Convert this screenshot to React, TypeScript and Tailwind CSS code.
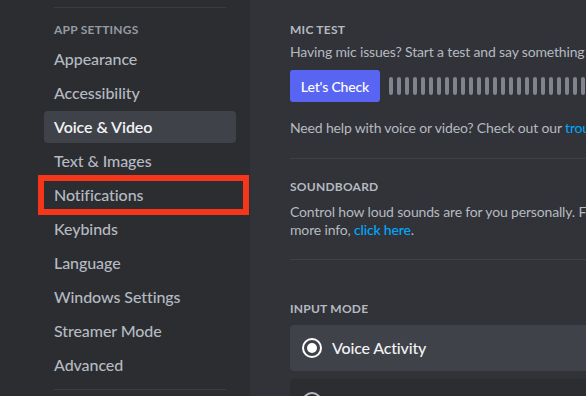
import { Fragment } from "react";

const items = [
  "Appearance",
  "Accessibility",
  "Voice & Video",
  "Text & Images",
  "Notifications",
  "Keybinds",
  "Language",
  "Windows Settings",
  "Streamer Mode",
  "Advanced",
];

export default function App() {
  return (
    <div
      className="flex w-[586px] h-[396px] overflow-hidden bg-[#313338]"
      style={{ fontFamily: "Lato, 'Noto Sans', sans-serif" }}
    >
      {/* Sidebar */}
      <aside className="relative w-[250px] shrink-0 bg-[#2b2d31] pt-[7px] pl-[44px] pr-[14px]">
        <div className="mx-[10px] h-px bg-[#3b3d44]" />
        <div className="mt-[14px] mb-[5px] px-[10px] text-[12px] leading-4 font-bold tracking-[0.02em] text-[#949ba4]">
          APP SETTINGS
        </div>
        {items.map((item) => (
          <Fragment key={item}>
            <div
              className={`h-8 mb-[2px] px-[10px] flex items-center rounded-[4px] text-[16px] tracking-[-0.005em] ${
                item === "Voice & Video"
                  ? "bg-[#404249] text-[#f2f3f5] font-semibold"
                  : "text-[#b5bac1] font-medium"
              }`}
            >
              {item}
            </div>
          </Fragment>
        ))}
        <div className="mt-[8px] mx-[10px] h-px bg-[#3b3d44]" />
        {/* annotation box */}
        <div className="absolute left-[38px] top-[175px] w-[211px] h-[40px] border-[6px] border-[#f5361a]" />
      </aside>

      {/* Main */}
      <main className="flex-1 pl-[40px] pt-[22px] min-w-0 tracking-[-0.01em]">
        <h3 className="text-[12px] leading-4 font-bold tracking-[0.02em] text-[#b5bac1]">
          MIC TEST
        </h3>
        <p className="mt-[4px] text-[14px] leading-5 text-[#b5bac1] whitespace-nowrap">
          Having mic issues? Start a test and say something fun — we'll play your voice back to you.
        </p>
        <div className="mt-[8px] flex items-center gap-[9px]">
          <button className="h-8 w-[90px] shrink-0 rounded-[3px] bg-[#5865f2] text-[14px] font-medium text-white">
            Let's Check
          </button>
          <div className="flex gap-[4px]">
            {Array.from({ length: 30 }).map((_, i) => (
              <span key={i} className="w-[4px] h-[18px] rounded-full bg-[#80848e]" />
            ))}
          </div>
        </div>
        <p className="mt-[16px] text-[14px] leading-5 text-[#b5bac1] whitespace-nowrap">
          Need help with voice or video? Check out our{" "}
          <span className="text-[#00a8fc]">troubleshooting guide</span>.
        </p>
        <div className="mt-[20px] h-px bg-[#3f4147]" />

        <h3 className="mt-[20px] text-[12px] leading-4 font-bold tracking-[0.02em] text-[#b5bac1]">
          SOUNDBOARD
        </h3>
        <p className="mt-[8px] text-[14px] leading-[18px] text-[#b5bac1] whitespace-nowrap">
          Control how loud sounds are for you personally. For
          <br />
          more info, <span className="text-[#00a8fc] font-medium">click here</span>.
        </p>
        <div className="mt-[20px] h-px bg-[#3f4147]" />

        <h3 className="mt-[41px] text-[12px] leading-4 font-bold tracking-[0.02em] text-[#b5bac1]">
          INPUT MODE
        </h3>
        <div className="mt-[8px] h-[46px] rounded-[4px] bg-[#404249] flex items-center pl-[12px] gap-[10px] w-[500px]">
          <span className="w-5 h-5 rounded-full border-2 border-white flex items-center justify-center">
            <span className="w-[10px] h-[10px] rounded-full bg-white" />
          </span>
          <span className="text-[16px] font-medium text-[#f2f3f5]">Voice Activity</span>
        </div>
        <div className="mt-[8px] h-[46px] rounded-[4px] bg-[#2b2d31] flex items-center pl-[12px] w-[500px]">
          <span className="w-5 h-5 rounded-full border-2 border-[#b5bac1]" />
        </div>
      </main>
    </div>
  );
}
